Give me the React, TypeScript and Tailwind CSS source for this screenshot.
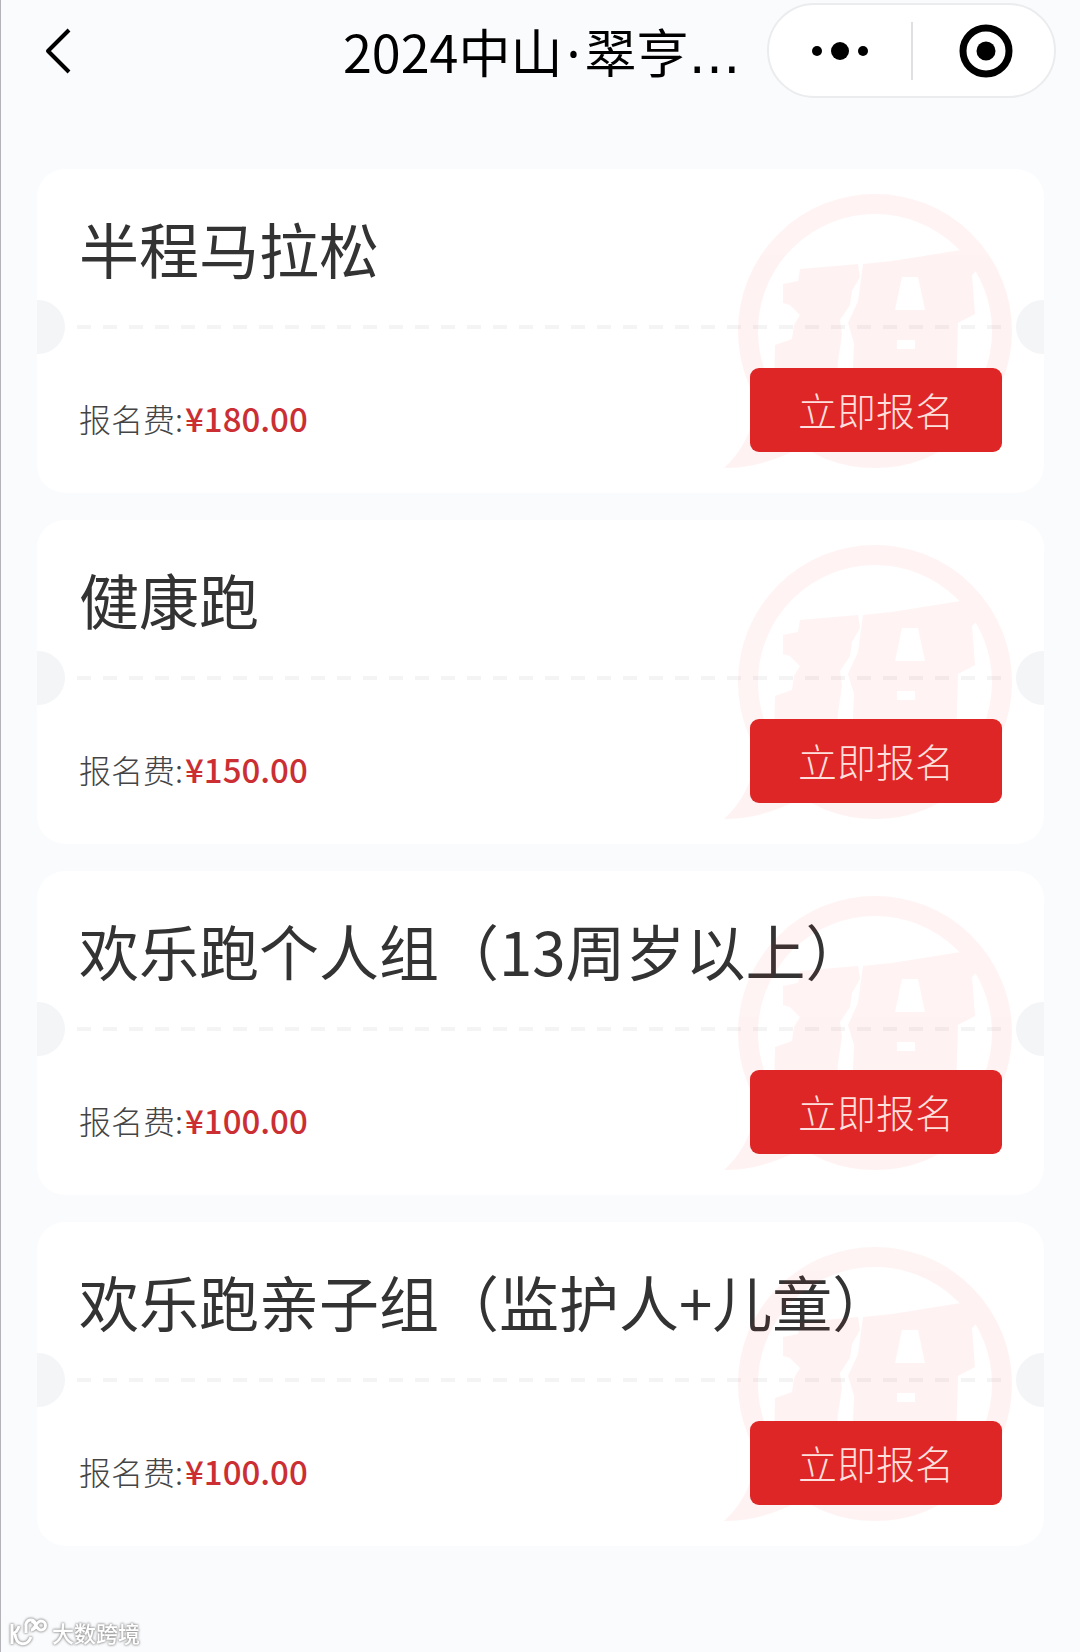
const FONT = "font-['Noto_Sans_CJK_SC','Noto_Sans',sans-serif]";

const events = [
  { name: "半程马拉松", fee: "¥180.00" },
  { name: "健康跑", fee: "¥150.00" },
  { name: "欢乐跑个人组（13周岁以上）", fee: "¥100.00" },
  { name: "欢乐跑亲子组（监护人+儿童）", fee: "¥100.00" },
];

function Seal() {
  return (
    <svg
      className="pointer-events-none absolute right-8 top-6 h-[280px] w-[290px]"
      viewBox="0 0 290 280"
      aria-hidden="true"
    >
      <g fill="#ff2020" opacity="0.052">
        <circle cx="153" cy="138" r="127" fill="none" stroke="#ff2020" strokeWidth="20" />
        <path d="M32 224C26 246 16 262 2 275C28 275 52 268 76 256Z" />
        <path d="M78 76L136 71L138 84L130 98L128 112L118 127L120 142L116 168L114 200H52L53 152L70 146L72 132L78 122L68 112L61 110V91L76 88Z" />
        <path
          fillRule="evenodd"
          d="M141 71L170 68L245 56L262 70L250 82L253 121L236 130L234 200H130L132 150L126 130L136 108ZM180 84L173 117H203L196 84ZM175 147V156H193V147Z"
        />
      </g>
    </svg>
  );
}

function EventCard({ name, fee }: { name: string; fee: string }) {
  return (
    <li className="relative overflow-hidden rounded-[28px] bg-white pb-[41px] pt-[39px]">
      <h2 className="px-[42px] text-[60px] leading-[80px] text-[#333333]">{name}</h2>
      <div className="mt-3 flex h-[54px] items-center justify-between">
        <span className="h-[54px] w-7 rounded-r-full bg-[#f3f5f7]" />
        <span className="mx-3 h-1 flex-1 bg-[repeating-linear-gradient(90deg,#f4f4f5_0_14px,transparent_14px_26px)]" />
        <span className="h-[54px] w-7 rounded-l-full bg-[#f3f5f7]" />
      </div>
      <Seal />
      <div className="relative mt-3.5 flex items-end justify-between px-[42px]">
        <p className="pb-2.5 text-[32px] font-light leading-[48px] text-[#444444]">
          报名费:<span className="ml-0.5 text-[33px] font-medium text-[#cb2f33]">{fee}</span>
        </p>
        <button
          type="button"
          className="h-[84px] w-[252px] rounded-[9px] bg-[#df2626] pb-0.5 text-[39px] font-light text-[#ffdfdc]"
        >
          立即报名
        </button>
      </div>
    </li>
  );
}

export default function App() {
  return (
    <div
      className={`${FONT} flex min-h-screen flex-col border-l border-[#b4b4b8] bg-[#fafbfd]`}
    >
      <header className="flex h-[101px] items-center pl-[38px] pr-6">
        <button type="button" aria-label="返回" className="flex w-[304px]">
          <svg width="36" height="56" viewBox="0 0 36 56" fill="none" stroke="#000" strokeWidth="4">
            <path d="M30 7L9 28L30 49" strokeLinejoin="round" />
          </svg>
        </button>
        <h1 className="whitespace-nowrap pt-1 text-[52px] leading-[72px] text-black">
          2024中山<span className="mx-1 font-['Noto_Sans']">·</span>翠亨
          <span className="font-['DejaVu_Sans']">…</span>
        </h1>
        <div className="ml-auto flex h-[95px] w-[289px] items-center rounded-full border-2 border-[#ebecee] bg-white">
          <button type="button" aria-label="更多" className="flex flex-1 justify-center">
            <svg width="60" height="24" viewBox="0 0 60 24">
              <circle cx="7" cy="12" r="5" />
              <circle cx="30" cy="12" r="9" />
              <circle cx="53" cy="12" r="5" />
            </svg>
          </button>
          <span className="h-[58px] w-0.5 bg-[#e0e0e2]" />
          <button type="button" aria-label="关闭" className="flex w-[141px] justify-center pl-1">
            <svg width="56" height="56" viewBox="0 0 56 56">
              <circle cx="28" cy="28" r="23" fill="none" stroke="#000" strokeWidth="7" />
              <circle cx="28" cy="28" r="9.5" />
            </svg>
          </button>
        </div>
      </header>

      <main className="flex-1 px-9 pt-[68px]">
        <ul className="flex flex-col gap-[27px]">
          {events.map((e) => (
            <EventCard key={e.name} name={e.name} fee={e.fee} />
          ))}
        </ul>
      </main>

      <footer className="flex items-center gap-1 pb-1.5 pl-2 text-[22px] font-medium leading-[28px] text-white [filter:drop-shadow(0_0_1px_#909090)_drop-shadow(0_0_1px_#b0b0b0)]">
        <svg width="39" height="28" viewBox="0 0 39 28" fill="none" stroke="#fff" strokeWidth="3">
          <path d="M3 6V26M3 16C6 15 9 12 10 8M6 16C7 28 18 29 22 19" />
          <path d="M17 15V8A5 5 0 1 1 22 12C26 12 27 3 32 3A4 4 0 1 1 32 12C27 12 27 3 22 3" />
        </svg>
        <span>大数跨境</span>
      </footer>
    </div>
  );
}
